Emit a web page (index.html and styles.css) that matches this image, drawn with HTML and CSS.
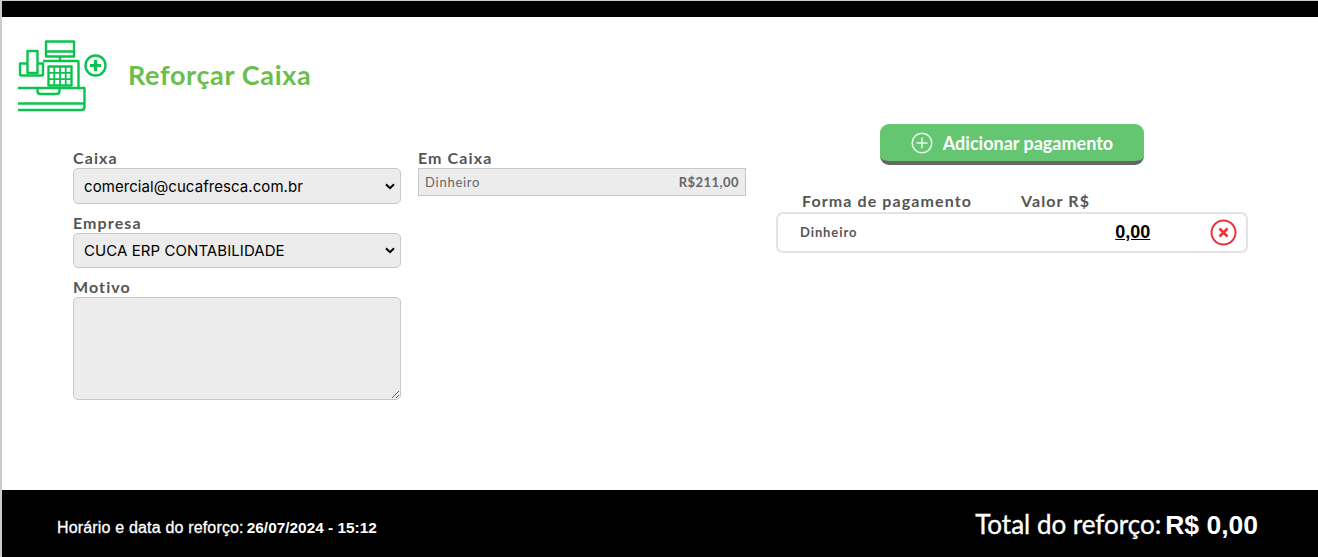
FILE: index.html
```html
<!DOCTYPE html>
<html lang="pt-BR">
<head>
<meta charset="utf-8">
<title>Reforçar Caixa</title>
<link rel="stylesheet" href="styles.css">
</head>
<body>
<div class="page">
  <div class="topbar"></div>
  <main class="main">
    <header class="head">
      <svg class="logo" width="92" height="72" viewBox="0 0 92 72" fill="none" stroke="#0bc44f" stroke-width="2.400" stroke-linejoin="round">
        <rect x="28" y="1.500" width="28" height="15"/>
        <path d="M28 11.500h28M42 16.500v4"/>
        <path d="M25 21h34.500q1 0 1 1v25"/>
        <rect x="9.500" y="11" width="10" height="22"/>
        <path d="M9.500 23.500H2v11q0 1 1 1h21q1 0 1-1v-11h-5.500"/>
        <rect x="30.500" y="26.500" width="23" height="19"/>
        <path d="M36.250 26.500v19M42 26.500v19M47.750 26.500v19M30.500 32.800h23M30.500 39.200h23" stroke-width="1.800"/>
        <path d="M0 48h66.500v19q0 3-3 3H0M0 63.500h66M19.500 48v3q0 3 3 3h16q3 0 3-3v-3"/>
        <circle cx="77.500" cy="25.500" r="10"/>
        <path d="M72 25.500h11M77.500 20v11" stroke-width="3.200"/>
      </svg>
      <h1 class="title">Reforçar Caixa</h1>
    </header>
    <div class="columns">
      <section class="col">
        <label class="label">Caixa</label>
        <select class="select"><option>comercial@cucafresca.com.br</option></select>
        <label class="label label-gap">Empresa</label>
        <select class="select select-b"><option>CUCA ERP CONTABILIDADE</option></select>
        <label class="label label-gap">Motivo</label>
        <textarea class="area"></textarea>
      </section>
      <section class="col">
        <label class="label">Em Caixa</label>
        <div class="balance"><span class="bal-name">Dinheiro</span><span class="bal-val">R$211,00</span></div>
      </section>
      <section class="pay">
        <button class="add" type="button">
          <svg width="22" height="22" viewBox="0 0 22 22" fill="none" stroke="#e9f7ec" stroke-width="1.500"><circle cx="11" cy="11" r="9.800"/><path d="M11 5.500v11M5.500 11h11"/></svg>
          <span>Adicionar pagamento</span>
        </button>
        <div class="pay-head"><span class="ph-a">Forma de pagamento</span><span>Valor R$</span></div>
        <div class="pay-row">
          <span class="pr-name">Dinheiro</span>
          <span class="pr-val">0,00</span>
          <svg class="pr-x" width="27" height="27" viewBox="0 0 27 27" fill="none" stroke="#ee3338"><circle cx="13.500" cy="13.500" r="12" stroke-width="2"/><path d="M9.500 9.500l8 8M17.500 9.500l-8 8" stroke-width="2.500"/></svg>
        </div>
      </section>
    </div>
  </main>
  <footer class="foot">
    <div class="stamp"><span class="st-label">Horário e data do reforço:</span> <b class="st-val">26/07/2024 - 15:12</b></div>
    <div class="total"><span class="t-label">Total do reforço:</span><b class="t-val">R$ 0,00</b></div>
  </footer>
</div>
</body>
</html>
```
FILE: styles.css
```css
* { box-sizing: border-box; }
html, body { margin: 0; height: 100%; background: #fff; overflow: hidden; }
body { font-family: Lato, "Liberation Sans", sans-serif; color: #555; }
.page { height: 557px; display: flex; flex-direction: column; border-left: 2px solid #ccc; border-top: 1px solid #ccc; }
.topbar { height: 16px; background: #000; flex: none; }
.main { flex: 1; padding: 23px 0 0 16px; }
.head { display: flex; align-items: center; height: 72px; }
.logo { flex: none; display: block; }
.title { margin: 0 0 4px 18px; font-size: 27px; font-weight: 700; letter-spacing: .65px; color: #6abf4b; }
.columns { display: grid; grid-template-columns: 328px 328px 485px; column-gap: 17px; margin: 12px 0 0 55px; align-items: start; }
.columns .pay { margin-left: 13px; }
.col { display: flex; flex-direction: column; padding-top: 26px; }
.label { display: block; font-size: 16px; font-weight: 700; letter-spacing: 1.1px; line-height: 15px; height: 18px; color: #555; }
.label-gap { margin-top: 11px; }
.select { display: block; width: 328px; height: 36px; padding: 0 24px 0 10px; font: 15px Inter, sans-serif; letter-spacing: .07px; color: #000; appearance: none; background: #ececec url("data:image/svg+xml,%3Csvg xmlns='http://www.w3.org/2000/svg' width='10' height='7' viewBox='0 0 10 7'%3E%3Cpath d='M1 1.200l4 4 4-4' fill='none' stroke='%23000' stroke-width='2'/%3E%3C/svg%3E") no-repeat right 5px center; border: 1px solid #c8c8c8; border-radius: 5px; }
.select-b { height: 35px; padding-bottom: 1px; }
.area { display: block; width: 328px; height: 103px; background: #ececec; border: 1px solid #c8c8c8; border-radius: 5px; }
.balance { display: flex; justify-content: space-between; align-items: center; width: 328px; height: 28px; padding: 0 6px; background: #ececec; border: 1px solid #c8c8c8; font-size: 13px; }
.bal-name { color: #666; letter-spacing: .75px; }
.bal-val { font-weight: 700; color: #666; letter-spacing: .45px; }
.pay { display: flex; flex-direction: column; }
.add { align-self: flex-start; margin-left: 104px; width: 264px; height: 41px; display: flex; align-items: center; justify-content: center; gap: 10px; padding: 0; background: #65c672; border: 0; border-bottom: 4px solid #666; border-radius: 9px; color: #fff; font: 700 18px Lato, sans-serif; }
.pay-head { display: flex; margin-top: 28px; padding-left: 26px; height: 19px; font-size: 16px; font-weight: 700; letter-spacing: 1.1px; line-height: 15px; color: #555; }
.ph-a { width: 219px; }
.pay-row { display: flex; align-items: center; height: 41px; padding: 0 9px 0 22px; border: 2px solid #e3e3e3; border-radius: 7px; }
.pr-name { font-size: 13px; font-weight: 700; letter-spacing: .9px; color: #555; width: 316px; margin-bottom: 2px; }
.pr-val { width: 95px; font: 700 18px "Liberation Sans", sans-serif; color: #000; text-decoration: underline; }
.pr-x { flex: none; }
.foot { height: 67px; flex: none; background: #000; color: #fff; display: flex; justify-content: space-between; align-items: center; padding: 0 60px 0 55px; }
.stamp { font: 14px "Liberation Sans", sans-serif; margin-top: 8px; display: flex; gap: 3px; align-items: baseline; }
.st-label { font-size: 16px; letter-spacing: .17px; -webkit-text-stroke: .3px #fff; }
.st-val { font-size: 15.400px; font-weight: 700; }
.total { display: flex; align-items: baseline; gap: 4px; margin-top: 2px; }
.t-label { font-size: 26px; font-weight: 400; -webkit-text-stroke: .35px #fff; }
.t-val { font: 700 26.500px "Liberation Sans", sans-serif; }
```
